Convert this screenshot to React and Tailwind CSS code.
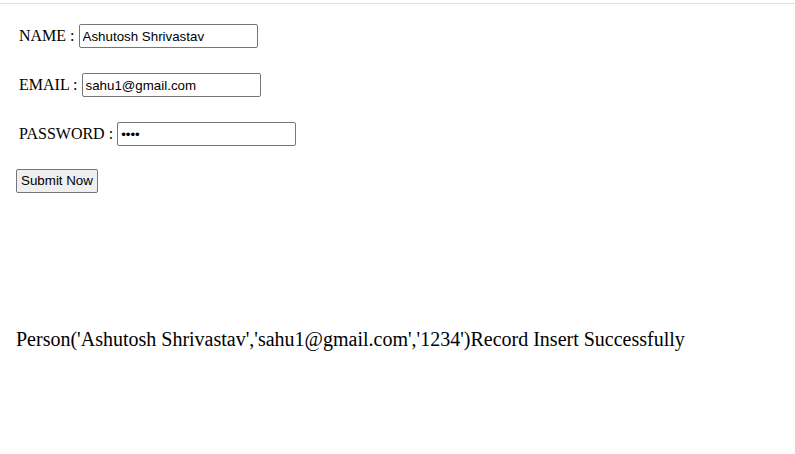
import React from 'react';

const Field = ({ label, type, value }) => (
  <div className="flex items-center h-[24px] pl-[3px]">
    <span className="whitespace-pre">{label} : </span>
    <input
      type={type}
      defaultValue={value}
      className="w-[179px] h-[24px] border border-[#767676] rounded-[2px] px-[3px] text-[13.33px] text-black bg-white font-['Liberation_Sans',Arial,sans-serif] outline-none"
    />
  </div>
);

const App = () => {
  return (
    <div className="min-h-[454px] bg-white text-black font-['Liberation_Serif','Times_New_Roman',serif] text-[16px]">
      <div className="h-[3px]" />
      <div className="border-t border-[#e0e0e0]" />
      <div className="px-4 pt-[20px]">
        <div className="flex flex-col gap-[25px]">
          <Field label="NAME" type="text" value="Ashutosh Shrivastav" />
          <Field label="EMAIL" type="email" value="sahu1@gmail.com" />
          <Field label="PASSWORD" type="password" value="1234" />
        </div>
        <button className="mt-[23px] h-[24px] w-[82px] border border-[#767676] rounded-[2px] bg-[#efefef] text-[13.33px] font-['Liberation_Sans',Arial,sans-serif] leading-none">
          Submit Now
        </button>
        <p className="mt-[134px] text-[20px] leading-[24px]">
          Person('Ashutosh Shrivastav','sahu1@gmail.com','1234')Record Insert Successfully
        </p>
      </div>
    </div>
  );
};

export default App;
